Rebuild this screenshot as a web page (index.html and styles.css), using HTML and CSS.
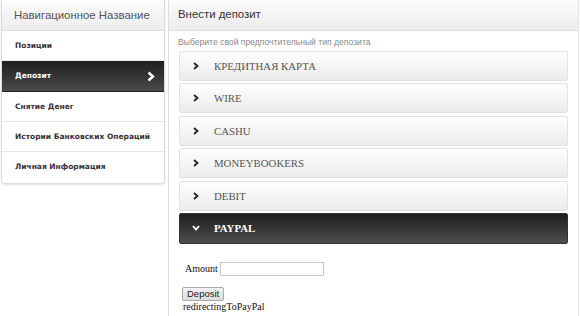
FILE: index.html
```html
<!DOCTYPE html>
<html>
<head>
<meta charset="utf-8">
<link rel="stylesheet" href="styles.css">
</head>
<body>
<div class="page">
  <aside class="sidebar">
    <div class="side-head">Навигационное Название</div>
    <div class="side-item">Позиции</div>
    <div class="side-item active">Депозит
      <svg class="side-chev" width="8" height="11" viewBox="0 0 8 11"><polyline points="1.5,1.5 6,5.5 1.5,9.5" fill="none" stroke="#fff" stroke-width="2.4"/></svg>
    </div>
    <div class="side-item">Снятие Денег</div>
    <div class="side-item">Истории Банковских Операций</div>
    <div class="side-item">Личная Информация</div>
  </aside>
  <main class="panel">
    <div class="panel-head">Внести депозит</div>
    <div class="panel-sub">Выберите свой предпочтительный тип депозита</div>
    <div class="acc">
      <div class="acc-item"><svg class="chev" width="6" height="8" viewBox="0 0 6 8"><polyline points="1,1 4.5,4 1,7" fill="none" stroke="#222" stroke-width="1.8"/></svg><span>КРЕДИТНАЯ КАРТА</span></div>
      <div class="acc-item"><svg class="chev" width="6" height="8" viewBox="0 0 6 8"><polyline points="1,1 4.5,4 1,7" fill="none" stroke="#222" stroke-width="1.8"/></svg><span>WIRE</span></div>
      <div class="acc-item"><svg class="chev" width="6" height="8" viewBox="0 0 6 8"><polyline points="1,1 4.5,4 1,7" fill="none" stroke="#222" stroke-width="1.8"/></svg><span>CASHU</span></div>
      <div class="acc-item"><svg class="chev" width="6" height="8" viewBox="0 0 6 8"><polyline points="1,1 4.5,4 1,7" fill="none" stroke="#222" stroke-width="1.8"/></svg><span>MONEYBOOKERS</span></div>
      <div class="acc-item"><svg class="chev" width="6" height="8" viewBox="0 0 6 8"><polyline points="1,1 4.5,4 1,7" fill="none" stroke="#222" stroke-width="1.8"/></svg><span>DEBIT</span></div>
      <div class="acc-item open"><svg class="chev" width="8" height="6" viewBox="0 0 8 6"><polyline points="1,1 4,4.5 7,1" fill="none" stroke="#fff" stroke-width="1.8"/></svg><span>PAYPAL</span></div>
    </div>
    <div class="form">
      <div class="row"><label class="lbl">Amount</label><input class="inp" type="text"></div>
      <button class="btn">Deposit</button>
      <div class="redir">redirectingToPayPal</div>
    </div>
  </main>
</div>
</body>
</html>
```
FILE: styles.css
```css
html, body { margin: 0; padding: 0; background: #fff; }
.page { display: flex; width: 580px; height: 316px; overflow: hidden; }
.sidebar {
  margin: 0 0 0 1px; width: 162px; height: 183px;
  border: 1px solid #dcdcdc; border-top: none; border-radius: 0 0 4px 4px;
  box-shadow: 0 1px 2px rgba(0,0,0,0.12);
  font-family: "DejaVu Sans", Verdana, sans-serif;
}
.side-head {
  height: 30px; line-height: 30px; padding-left: 12px;
  font-family: "Liberation Sans", Arial, sans-serif; font-size: 11.4px; color: #555;
  background: linear-gradient(#fdfdfd, #ececec); border-bottom: 1px solid #ddd;
}
.side-item {
  height: 29px; line-height: 30px; padding-left: 13px; border-bottom: 1px solid #e8e8e8;
  font-size: 7.5px; font-weight: bold; color: #3a2f36; position: relative;
}
.side-item:last-child { border-bottom: none; }
.side-item.active {
  background: linear-gradient(#1f1f1f, #4a4a4a); color: #fff; height: 30px; line-height: 30px;
  border-bottom: 1px solid #222;
}
.side-chev { position: absolute; right: 9px; top: 10px; }
.panel {
  margin-left: 3px; width: 409px; height: 316px;
  border-left: 1px solid #dedede; border-right: 1px solid #e4e4e4;
  font-family: "Liberation Sans", Arial, sans-serif;
}
.panel-head {
  height: 30px; line-height: 29px; padding-left: 9px; font-size: 11.4px; color: #333;
  background: linear-gradient(#fcfcfc, #ececec); border-bottom: 1px solid #e0e0e0;
}
.panel-sub { padding: 6px 0 0 9px; font-size: 8.6px; color: #8a8a8a; height: 14px; }
.acc { margin: 0 10px 0 10px; display: flex; flex-direction: column; gap: 2.4px; }
.acc-item {
  height: 28px; display: flex; align-items: center;
  border: 1px solid #e2e2e2; border-radius: 2px;
  background: linear-gradient(#fefefe, #ebebeb);
  font-family: "Liberation Serif", "Times New Roman", serif; font-size: 10.8px; color: #555;
}
.acc-item .chev { margin-left: 13px; margin-right: 15px; flex: none; }
.acc-item.open {
  background: linear-gradient(#1e1e1e, #4e4e4e); border-color: #333; color: #fff; font-weight: bold;
  height: 29px;
}
.acc-item.open .chev { margin-left: 12px; margin-right: 14px; }
.form { padding: 18px 0 0 13px; font-family: "Liberation Serif", "Times New Roman", serif; color: #111; }
.row { display: flex; align-items: center; height: 14px; }
.lbl { font-size: 10px; margin-left: 3px; margin-right: 2px; }
.inp { width: 100px; height: 10px; border: 1px solid #c8c8c8; padding: 1px; margin: 0; }
.btn {
  margin-top: 11px; display: block; height: 14px; padding: 0 4px; font-size: 9.5px;
  font-family: "Liberation Sans", Arial, sans-serif; color: #222;
  background: linear-gradient(#f2f2f2, #dcdcdc); border: 1px solid #aaa; border-radius: 2px; line-height: 12px;
}
.redir { font-size: 10px; line-height: 11px; margin-left: 1px; }
```
